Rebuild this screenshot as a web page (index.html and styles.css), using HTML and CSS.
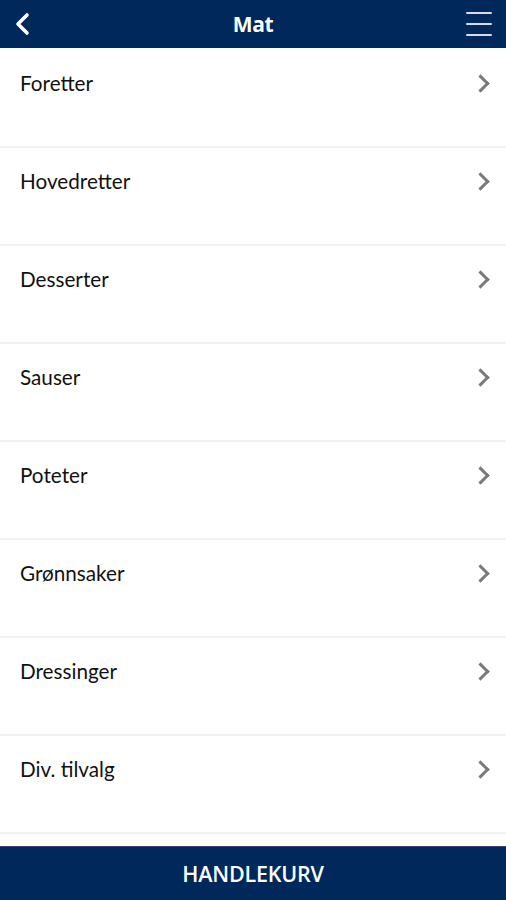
FILE: index.html
```html
<!DOCTYPE html>
<html lang="no">
<head>
<meta charset="utf-8">
<title>Mat</title>
<link rel="stylesheet" href="styles.css">
</head>
<body>
<div class="app">
  <header class="topbar">
    <button class="icon-btn back" aria-label="Tilbake">
      <svg width="18" height="24" viewBox="0 0 18 24"><path d="M13 3 L4 12 L13 21" fill="none" stroke="#ffffff" stroke-width="3.6" stroke-linecap="round" stroke-linejoin="round"/></svg>
    </button>
    <h1 class="title">Mat</h1>
    <button class="icon-btn menu" aria-label="Meny">
      <span class="bar"></span><span class="bar"></span><span class="bar"></span>
    </button>
  </header>
  <ul class="list">
    <li class="item"><span class="label">Foretter</span><span class="chev"></span></li>
    <li class="item"><span class="label">Hovedretter</span><span class="chev"></span></li>
    <li class="item"><span class="label">Desserter</span><span class="chev"></span></li>
    <li class="item"><span class="label">Sauser</span><span class="chev"></span></li>
    <li class="item"><span class="label">Poteter</span><span class="chev"></span></li>
    <li class="item"><span class="label">Grønnsaker</span><span class="chev"></span></li>
    <li class="item"><span class="label">Dressinger</span><span class="chev"></span></li>
    <li class="item"><span class="label">Div. tilvalg</span><span class="chev"></span></li>
  </ul>
  <footer class="cart">HANDLEKURV</footer>
</div>
</body>
</html>
```
FILE: styles.css
```css
* { box-sizing: border-box; }
html, body { margin: 0; padding: 0; }
body {
  background: #ffffff;
  font-family: Lato, "Open Sans", "Liberation Sans", sans-serif;
  width: 506px;
  height: 900px;
  overflow: hidden;
}
.app {
  display: flex;
  flex-direction: column;
  height: 900px;
}
.topbar {
  height: 50px;
  background: #00285b;
  border-bottom: 2px solid #ffffff;
  display: flex;
  align-items: center;
  justify-content: space-between;
  padding: 0 12px 0 12px;
  flex: none;
}
.icon-btn {
  background: none;
  border: none;
  padding: 0;
  width: 36px;
  height: 40px;
  display: flex;
  align-items: center;
  cursor: pointer;
}
.back { justify-content: flex-start; padding-left: 2px; }
.menu {
  flex-direction: column;
  justify-content: center;
  align-items: flex-end;
  gap: 8.5px;
  padding-right: 2px;
}
.bar {
  display: block;
  width: 26px;
  height: 2.5px;
  background: #d9d9ea;
  border-radius: 1px;
}
.title {
  margin: 0;
  color: #ffffff;
  font-family: "Open Sans", Lato, sans-serif;
  font-weight: 700;
  font-size: 21px;
  letter-spacing: -0.3px;
}
.list {
  list-style: none;
  margin: 0;
  padding: 0;
  flex: none;
}
.item {
  height: 98px;
  border-bottom: 2px solid #f1f1f1;
  display: flex;
  justify-content: space-between;
  align-items: flex-start;
  padding: 21px 16px 0 20px;
}
.label {
  font-size: 20.7px;
  color: #111111;
  line-height: 24px;
}
.chev {
  width: 13px;
  height: 13px;
  border-right: 3px solid #7a7a7a;
  border-top: 3px solid #7a7a7a;
  transform: rotate(45deg);
  margin-top: 6px;
  margin-right: 3px;
}
.cart {
  margin-top: auto;
  height: 54px;
  background: #00285b;
  border-top: 1px solid #3b3f7a;
  color: #ffffff;
  font-family: "Open Sans", Lato, sans-serif;
  font-weight: 600;
  font-size: 21.5px;
  display: flex;
  align-items: center;
  justify-content: center;
  letter-spacing: -0.2px;
}
```
